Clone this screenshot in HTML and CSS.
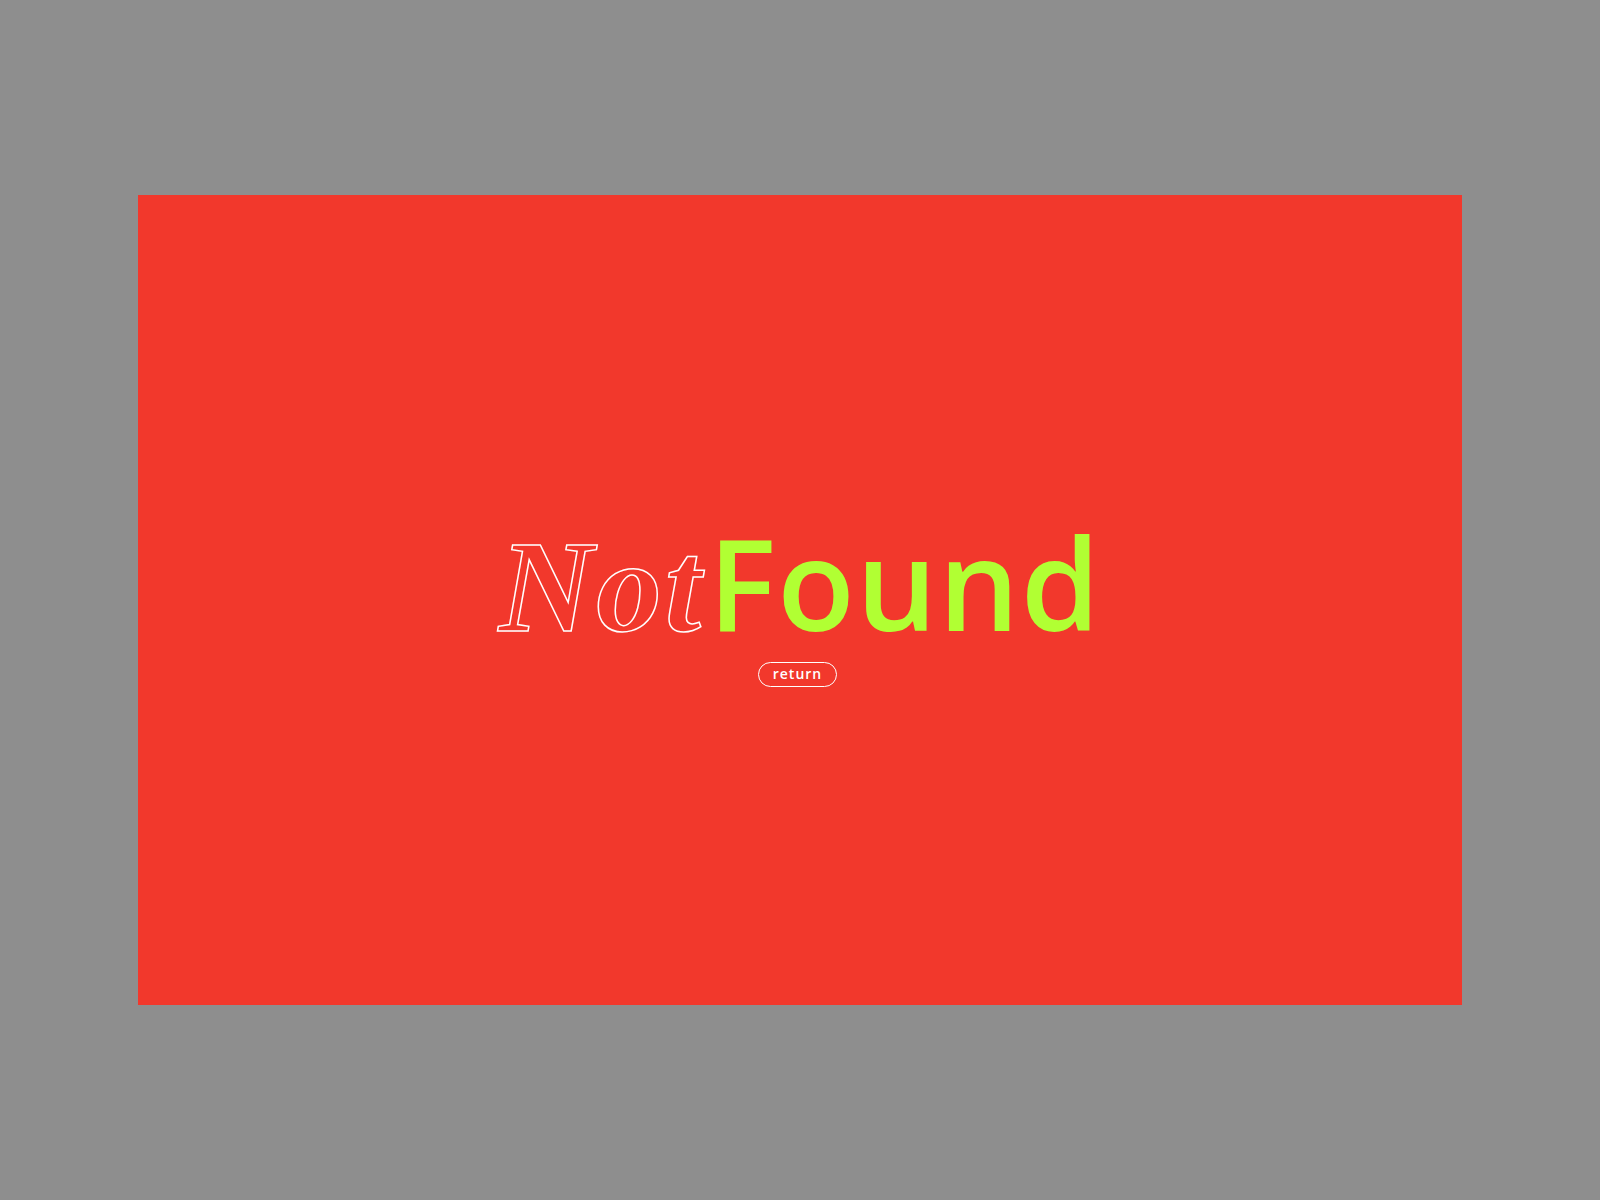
FILE: index.html
```html
<!DOCTYPE html>
<html lang="en">
<head>
<meta charset="utf-8">
<title>Not Found</title>
<link rel="stylesheet" href="styles.css">
</head>
<body>
<main class="stage">
  <section class="panel">
    <h1 class="title"><span class="title-not">Not</span><span class="title-found">Found</span></h1>
    <a class="return-btn" href="#">return</a>
  </section>
</main>
</body>
</html>
```
FILE: styles.css
```css
html, body {
  margin: 0;
  padding: 0;
  height: 100%;
}

body {
  background: #8e8e8e;
}

.stage {
  height: 1200px;
  display: flex;
  align-items: center;
  justify-content: center;
}

.panel {
  width: 1324px;
  height: 810px;
  background: #f2382c;
  display: flex;
  flex-direction: column;
  align-items: center;
  justify-content: center;
  padding-top: 12px;
  box-sizing: border-box;
}

/* headline: outlined serif word followed by solid sans word */
.title {
  margin: 0;
  display: flex;
  align-items: baseline;
  font-weight: normal;
  white-space: nowrap;
}

.title-not,
.title-found {
  display: inline-block;
  line-height: 0.9;
}

.title-not {
  font-family: "Liberation Serif", serif;
  font-style: italic;
  font-weight: 700;
  font-size: 131px;
  letter-spacing: 3px;
  margin-right: 4px;
  color: transparent;
  -webkit-text-stroke: 1.5px #ffffff;
}

.title-found {
  font-family: "Open Sans", sans-serif;
  font-weight: 600;
  font-size: 127px;
  letter-spacing: 1.5px;
  color: #b1ff33;
}

.return-btn {
  margin-top: 17px;
  margin-right: 5px;
  display: inline-block;
  padding: 2px 14px 3px;
  border: 1px solid #ffffff;
  border-radius: 14px;
  color: #ffffff;
  text-decoration: none;
  font-family: "Open Sans", sans-serif;
  font-weight: 600;
  font-size: 14px;
  letter-spacing: 1px;
  line-height: 18px;
}
```
